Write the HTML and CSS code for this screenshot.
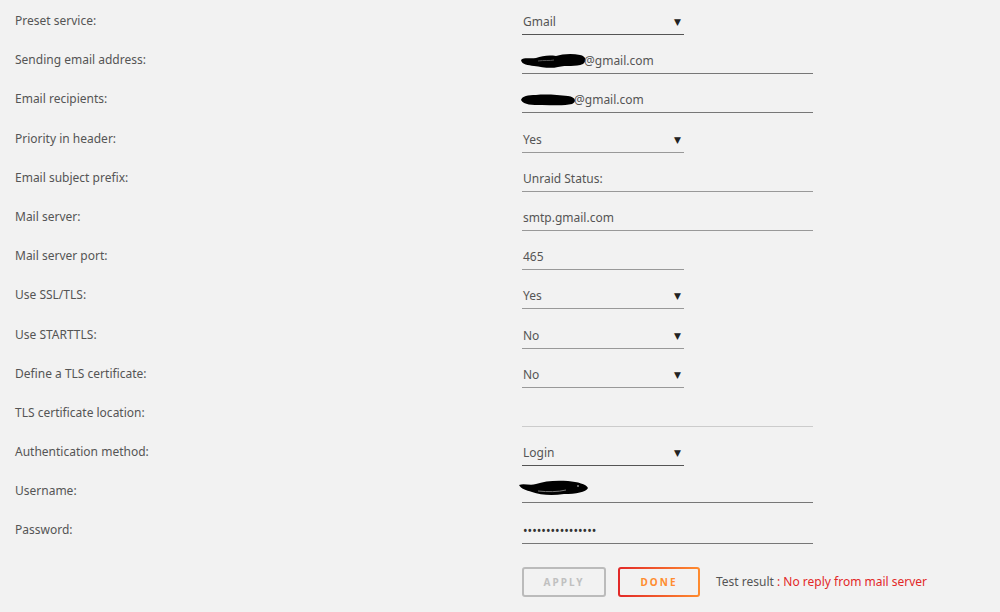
FILE: index.html
```html
<!DOCTYPE html>
<html lang="en">
<head>
<meta charset="utf-8">
<title>Notification Settings - SMTP</title>
<link rel="stylesheet" href="styles.css">
</head>
<body>
<form class="smtp-form">
  <div class="row">
    <span class="label">Preset service:</span>
    <div class="field select dark"><span>Gmail</span><span class="caret">▼</span></div>
  </div>
  <div class="row">
    <span class="label">Sending email address:</span>
    <div class="field input mid"><span class="masked"><svg class="scribble" width="68" height="18" viewBox="0 0 68 18"><path d="M1 8 C4 5 10 7 16 6 C22 4 28 3 36 4 C42 2 52 1 60 3 C66 4 67 9 63 12 C56 15 46 13 38 15 C30 17 22 15 14 14 C8 13 2 13 1 8 Z" fill="#000"/><path d="M18 9 C24 8 30 9 34 8" stroke="#555" stroke-width="1" fill="none"/></svg>@gmail.com</span></div>
  </div>
  <div class="row">
    <span class="label">Email recipients:</span>
    <div class="field input mid"><span class="masked"><svg class="scribble" width="58" height="16" viewBox="0 0 58 16"><path d="M1 8 C2 4 8 3 16 3 C26 2 38 3 48 4 C56 5 57 10 52 12 C44 14 32 13 22 13 C12 13 4 13 1 8 Z" fill="#000"/></svg>@gmail.com</span></div>
  </div>
  <div class="row">
    <span class="label">Priority in header:</span>
    <div class="field select"><span>Yes</span><span class="caret">▼</span></div>
  </div>
  <div class="row">
    <span class="label">Email subject prefix:</span>
    <div class="field input"><span>Unraid Status:</span></div>
  </div>
  <div class="row">
    <span class="label">Mail server:</span>
    <div class="field input"><span>smtp.gmail.com</span></div>
  </div>
  <div class="row">
    <span class="label">Mail server port:</span>
    <div class="field select"><span>465</span></div>
  </div>
  <div class="row">
    <span class="label">Use SSL/TLS:</span>
    <div class="field select"><span>Yes</span><span class="caret">▼</span></div>
  </div>
  <div class="row">
    <span class="label">Use STARTTLS:</span>
    <div class="field select"><span>No</span><span class="caret">▼</span></div>
  </div>
  <div class="row">
    <span class="label">Define a TLS certificate:</span>
    <div class="field select"><span>No</span><span class="caret">▼</span></div>
  </div>
  <div class="row">
    <span class="label">TLS certificate location:</span>
    <div class="field input disabled"><span>&nbsp;</span></div>
  </div>
  <div class="row">
    <span class="label">Authentication method:</span>
    <div class="field select dark"><span>Login</span><span class="caret">▼</span></div>
  </div>
  <div class="row">
    <span class="label">Username:</span>
    <div class="field input mid"><span class="masked"><svg class="scribble user" width="72" height="20" viewBox="0 0 72 20"><path d="M1 6 C6 4 12 7 18 5 C26 2 38 1 50 2 C60 3 68 5 70 9 C68 13 58 15 46 15 C34 17 22 16 14 13 C8 11 3 10 1 6 Z" fill="#000"/><path d="M20 12 C30 13 40 13 48 11" stroke="#777" stroke-width="1" fill="none"/><circle cx="60" cy="7" r="1" fill="#888"/></svg></span></div>
  </div>
  <div class="row">
    <span class="label">Password:</span>
    <div class="field input mid"><span class="dots">••••••••••••••••</span></div>
  </div>
  <div class="row actions">
    <span class="label"></span>
    <div class="buttons">
      <button type="button" class="btn apply" disabled>APPLY</button>
      <button type="button" class="btn done">DONE</button>
      <span class="result">Test result <span class="error">: No reply from mail server</span></span>
    </div>
  </div>
</form>
</body>
</html>
```

FILE: styles.css
```css
html, body {
  margin: 0;
  padding: 0;
  background: #f2f2f2;
}

body {
  font-family: "Noto Sans", "Open Sans", "DejaVu Sans", sans-serif;
  font-size: 12px;
  color: #555;
}

.smtp-form {
  padding: 1px 0 0 15px;
}

.row {
  display: grid;
  grid-template-columns: 507px 1fr;
  height: 39.2px;
  align-items: start;
}

.label {
  padding-top: 11px;
  line-height: 18px;
  color: #555;
}

.field {
  display: flex;
  align-items: center;
  justify-content: space-between;
  box-sizing: border-box;
  padding: 12px 0 3px 1px;
  line-height: 18px;
  border-bottom: 1px solid #999;
  color: #555;
}

.field.select {
  width: 162px;
}

.field.input {
  width: 291px;
}

.field.dark {
  border-bottom-color: #555;
}

.field.mid {
  border-bottom-color: #777;
}

.field.disabled {
  border-bottom-color: #ccc;
}

.caret {
  font-size: 9px;
  color: #222;
  padding-right: 3px;
}

.masked {
  display: inline-flex;
  align-items: center;
}

.scribble {
  margin-left: -3px;
  margin-right: -4px;
}

.scribble.user {
  margin-left: -5px;
  margin-top: -4px;
}

.dots {
  font-size: 12.2px;
  letter-spacing: 0;
  color: #333;
}

.actions {
  height: auto;
}

.buttons {
  display: flex;
  align-items: center;
  margin-top: 17px;
  gap: 12px;
}

.btn {
  box-sizing: border-box;
  height: 30px;
  font-family: "Noto Sans", "Open Sans", sans-serif;
  font-size: 10px;
  font-weight: 700;
  letter-spacing: 2px;
  border-radius: 3px;
  padding: 0;
  cursor: pointer;
}

.btn.apply {
  width: 84px;
  color: #c0c0c0;
  background: transparent;
  border: 2px solid #bbb;
}

.btn.done {
  width: 82px;
  color: #ff8c2f;
  border: 2px solid transparent;
  background:
    linear-gradient(#f2f2f2, #f2f2f2) padding-box,
    linear-gradient(90deg, #e22828, #ff8c2f) border-box;
}

.result {
  margin-left: 4px;
  font-size: 12px;
  color: #555;
}

.error {
  color: #e22828;
}
```
